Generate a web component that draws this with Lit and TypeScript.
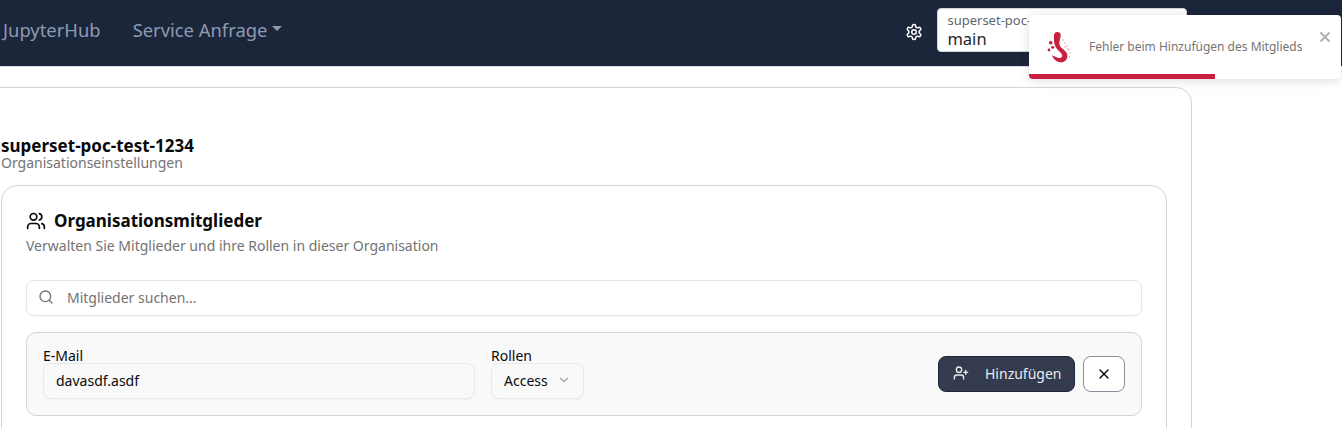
import { LitElement, html, css } from "lit";
import { customElement } from "lit/decorators.js";

@customElement("app-root")
export class AppRoot extends LitElement {
  static styles = css`
    :host { display: block; width: 1342px; height: 428px; overflow: hidden; position: relative; background: #fff; font-family: "Noto Sans", sans-serif; color: #0a0a0a; }
    * { box-sizing: border-box; }
    .nav { height: 67px; background: #1c263b; border-bottom: 1px solid #dee2e6; display: flex; align-items: center; padding-left: 3px; }
    .nav-link { font-size: 18.4px; line-height: 27px; color: #8c9ab0; margin-bottom: 8px; }
    .nav-link.second { margin-left: 32px; display: flex; align-items: center; }
    .caret { width: 0; height: 0; margin-left: 5px; margin-top: -2px; border-left: 5px solid transparent; border-right: 5px solid transparent; border-top: 5px solid #8c9ab0; }
    .gear { margin-left: 623px; margin-top: -2px; width: 18px; height: 18px; color: #fff; display: block; }
    .org { margin-left: 14px; width: 250px; height: 44px; background: #fff; border: 1px solid #ced4da; border-radius: 4px; padding: 3px 10px 3px 9px; margin-top: -7px; }
    .org small { display: block; font-size: 13px; line-height: 16px; color: #5f6670; }
    .org span { display: block; font-size: 16.5px; line-height: 22px; color: #212529; }
    .outer { margin: 20px 0 0 -25px; width: 1217px; height: 500px; border: 1px solid #d4d4d4; border-radius: 16px; padding: 48px 24px 0 25px; }
    h1 { margin: 0; height: 19px; font-size: 17px; line-height: 20px; font-weight: 700; color: #0a0a0a; }
    .sub { font-size: 14px; line-height: 16px; color: #737373; }
    .inner { margin-top: 14px; width: 1166px; height: 400px; border: 1px solid #d4d4d4; border-radius: 16px; padding: 23px 24px 24px; }
    .head { display: flex; align-items: center; gap: 8px; height: 24px; }
    .head svg { width: 20px; height: 20px; display: block; }
    h2 { margin: 0; font-size: 17px; line-height: 24px; font-weight: 700; color: #0a0a0a; }
    .desc { margin-top: 3px; font-size: 14px; line-height: 20px; color: #737373; }
    .search { margin-top: 24px; height: 36px; border: 1px solid #e5e5e5; border-radius: 8px; display: flex; align-items: center; padding: 0 0 2px 11px; gap: 13px; font-size: 14px; color: #737373; box-shadow: 0 1px 2px rgba(0,0,0,.03); }
    .search svg { width: 16px; height: 16px; color: #737373; }
    .form { margin-top: 16px; height: 84px; border: 1px solid #d4d4d4; border-radius: 10px; background: #f9f9f9; padding: 16px; display: flex; align-items: center; }
    .field label { display: block; font-size: 14px; line-height: 14px; color: #0a0a0a; }
    .email { width: 432px; }
    .roles { margin-left: 16px; }
    .input { height: 36px; border: 1px solid #e9e9e9; border-radius: 8px; background: #f9f9f9; display: flex; align-items: center; padding: 0 12px 2px; font-size: 14px; color: #0a0a0a; box-shadow: 0 1px 2px rgba(0,0,0,.04); }
    .select { width: 93px; justify-content: space-between; }
    .select svg { width: 14px; height: 14px; color: #a3a3a3; }
    .actions { margin-left: auto; display: flex; gap: 8px; }
    .add { width: 137px; height: 36px; border: 1px solid #1c263b; border-radius: 8px; background: #343b4e; color: #e8ebf0; font-size: 14px; display: flex; align-items: center; gap: 16px; padding: 0 0 2px 14px; }
    .add svg { width: 16px; height: 16px; }
    .close { width: 42px; height: 36px; border: 1px solid #8b8b9c; border-radius: 8px; background: #fff; display: flex; align-items: center; justify-content: center; }
    .close svg { width: 16px; height: 16px; color: #0a0a0a; }
    .toast { position: absolute; left: 1029px; top: 15px; width: 312px; height: 64px; background: #fff; border-radius: 4px; box-shadow: 0 1px 10px rgba(0,0,0,.1), 0 2px 15px rgba(0,0,0,.05); display: flex; align-items: center; padding: 0 0 4px 16px; overflow: hidden; }
    .toast .logo { width: 28px; height: 36px; display: block; }
    .toast .msg { margin-left: 16px; margin-top: 2px; font-size: 12px; color: #757575; }
    .toast .x { position: absolute; right: 10px; top: 16px; width: 12px; height: 12px; color: #b0b0b0; }
    .bar { position: absolute; left: 0; bottom: 0; width: 186px; height: 5px; background: #c71f3f; }
  `;

  render() {
    return html`
      <div class="nav">
        <div class="nav-link">JupyterHub</div>
        <div class="nav-link second">Service Anfrage<span class="caret"></span></div>
        <svg class="gear" viewBox="0 0 24 24" fill="none" stroke="currentColor" stroke-width="2" stroke-linecap="round" stroke-linejoin="round"><path d="M12.22 2h-.44a2 2 0 0 0-2 2v.18a2 2 0 0 1-1 1.73l-.43.25a2 2 0 0 1-2 0l-.15-.08a2 2 0 0 0-2.73.73l-.22.38a2 2 0 0 0 .73 2.73l.15.1a2 2 0 0 1 1 1.72v.51a2 2 0 0 1-1 1.74l-.15.09a2 2 0 0 0-.73 2.73l.22.38a2 2 0 0 0 2.73.73l.15-.08a2 2 0 0 1 2 0l.43.25a2 2 0 0 1 1 1.73V20a2 2 0 0 0 2 2h.44a2 2 0 0 0 2-2v-.18a2 2 0 0 1 1-1.73l.43-.25a2 2 0 0 1 2 0l.15.08a2 2 0 0 0 2.73-.73l.22-.39a2 2 0 0 0-.73-2.73l-.15-.08a2 2 0 0 1-1-1.74v-.5a2 2 0 0 1 1-1.74l.15-.09a2 2 0 0 0 .73-2.73l-.22-.38a2 2 0 0 0-2.73-.73l-.15.08a2 2 0 0 1-2 0l-.43-.25a2 2 0 0 1-1-1.73V4a2 2 0 0 0-2-2z"/><circle cx="12" cy="12" r="3"/></svg>
        <div class="org"><small>superset-poc-test-1234</small><span>main</span></div>
      </div>
      <div class="outer">
        <h1>superset-poc-test-1234</h1>
        <div class="sub">Organisationseinstellungen</div>
        <div class="inner">
          <div class="head">
            <svg viewBox="0 0 24 24" fill="none" stroke="currentColor" stroke-width="2" stroke-linecap="round" stroke-linejoin="round"><path d="M16 21v-2a4 4 0 0 0-4-4H6a4 4 0 0 0-4 4v2"/><circle cx="9" cy="7" r="4"/><path d="M22 21v-2a4 4 0 0 0-3-3.87"/><path d="M16 3.13a4 4 0 0 1 0 7.75"/></svg>
            <h2>Organisationsmitglieder</h2>
          </div>
          <div class="desc">Verwalten Sie Mitglieder und ihre Rollen in dieser Organisation</div>
          <div class="search">
            <svg viewBox="0 0 24 24" fill="none" stroke="currentColor" stroke-width="2" stroke-linecap="round" stroke-linejoin="round"><circle cx="11" cy="11" r="8"/><path d="m21 21-4.3-4.3"/></svg>
            <span>Mitglieder suchen...</span>
          </div>
          <div class="form">
            <div class="field email"><label>E-Mail</label><div class="input">davasdf.asdf</div></div>
            <div class="field roles"><label>Rollen</label><div class="input select"><span>Access</span><svg viewBox="0 0 24 24" fill="none" stroke="currentColor" stroke-width="2" stroke-linecap="round" stroke-linejoin="round"><path d="m6 9 6 6 6-6"/></svg></div></div>
            <div class="actions">
              <div class="add"><svg viewBox="0 0 24 24" fill="none" stroke="currentColor" stroke-width="2" stroke-linecap="round" stroke-linejoin="round"><path d="M16 21v-2a4 4 0 0 0-4-4H6a4 4 0 0 0-4 4v2"/><circle cx="9" cy="7" r="4"/><path d="M19 8v6"/><path d="M22 11h-6"/></svg><span>Hinzufügen</span></div>
              <div class="close"><svg viewBox="0 0 24 24" fill="none" stroke="currentColor" stroke-width="2" stroke-linecap="round" stroke-linejoin="round"><path d="M18 6 6 18"/><path d="m6 6 12 12"/></svg></div>
            </div>
          </div>
        </div>
      </div>
      <div class="toast">
        <svg class="logo" viewBox="0 0 28 36">
          <path fill="#c71f3f" d="M12.300 5C14.500 5 15.800 6.500 15.700 8.500C15.600 11 14.500 13 14.300 16C14.200 19 16 20.500 18.300 22.300C21 24.500 22.600 26.500 22.400 29C22.200 33 19.500 35.300 16 35.300C12 35.300 8.500 32.500 6.700 28C8.500 29 9.500 29.500 11 30C13 31 15.500 31.500 16.800 30C18 28.500 16.500 26.500 15 25C12.500 22.500 10.500 20.500 9.500 17C8.700 14 9 11 9 8.500C9 6.500 10.300 5 12.300 5Z"/>
          <circle cx="5.700" cy="15.700" r="1.800" fill="#c71f3f"/><circle cx="7.700" cy="20.300" r="1.500" fill="#c71f3f"/><circle cx="4" cy="23" r="1.400" fill="#c71f3f"/>
          <g fill="#e2899b"><circle cx="18" cy="13" r=".7"/><circle cx="20" cy="16" r=".7"/><circle cx="22" cy="19" r=".7"/><circle cx="20" cy="20" r=".7"/><circle cx="24" cy="23" r=".7"/><circle cx="25" cy="26" r=".7"/><circle cx="23" cy="22" r=".7"/><circle cx="24.500" cy="30" r=".7"/></g>
        </svg>
        <div class="msg">Fehler beim Hinzufügen des Mitglieds</div>
        <svg class="x" viewBox="0 0 12 12" fill="none" stroke="currentColor" stroke-width="2"><path d="M1.500 1.500l9 9M10.500 1.500l-9 9"/></svg>
        <div class="bar"></div>
      </div>
    `;
  }
}
